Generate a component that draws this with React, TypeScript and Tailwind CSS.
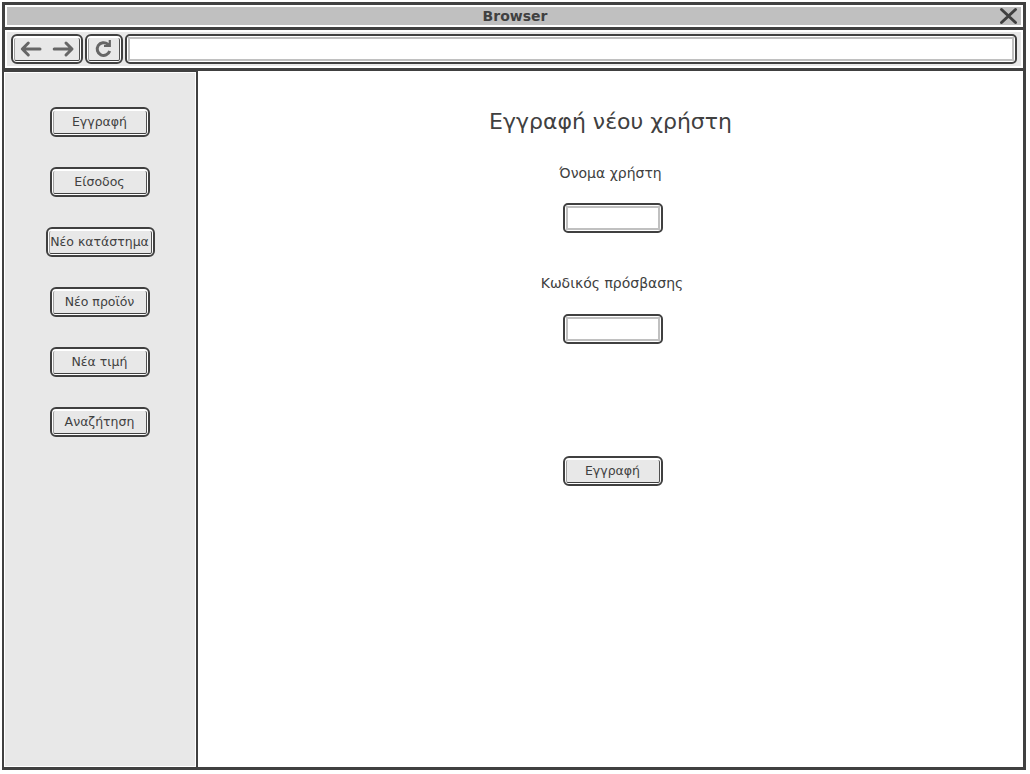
import React from "react";

function Button({ label, className = "w-[100px]" }: { label: string; className?: string }) {
  return (
    <button
      className={`flex h-[30px] shrink-0 rounded-[6px] border-2 border-[#404040] bg-white p-px pt-[2px] ${className}`}
    >
      <span className="flex h-full w-full items-center justify-center whitespace-nowrap rounded-[2px] border-b border-l border-r border-b-[#404040] border-l-[#a0a0a0] border-r-[#505050] bg-[#e8e8e8] pr-px text-[12.5px] leading-[14px]">
        {label}
      </span>
    </button>
  );
}

function Field({ className, label }: { className: string; label: string }) {
  return (
    <div className={`rounded-[5px] border-2 border-[#404040] bg-white p-px ${className}`}>
      <input aria-label={label} className="block h-full w-full border-2 border-[#c0c0c0] bg-white px-1 text-xs outline-none" />
    </div>
  );
}

const ICON = { fill: "none", stroke: "#666666", strokeWidth: 3, strokeLinecap: "round", strokeLinejoin: "round" } as const;

export default function App() {
  return (
    <div className="h-[774px] w-[1030px] bg-white pl-[2px] pt-[2px] font-['DejaVu_Sans',sans-serif] text-[#404040]">
      <div className="flex h-[768px] w-[1024px] flex-col border-[3px] border-[#404040]">
        <header className="h-[25px] shrink-0 border-b-[3px] border-[#404040] p-[2px]">
          <div className="flex h-full items-center bg-[#c0c0c0] pr-[3px]">
            <h1 className="flex-1 pl-[24px] text-center text-[14px] font-bold leading-[18px]">Browser</h1>
            <svg width="19" height="18" viewBox="0 0 19 18" fill="none" stroke="#404040" strokeWidth="3" strokeLinecap="round">
              <path d="M2.5 2.5 16.5 15.5M16.5 2.5 2.5 15.5" />
            </svg>
          </div>
        </header>
        <div className="h-[41px] shrink-0 border-b-[3px] border-[#404040] p-[2px]">
          <div className="flex h-full gap-[2px] bg-[#e8e8e8] px-1 pt-[2px]">
            <div className="h-[30px] w-[72px] rounded-[6px] border-2 border-[#404040] bg-white p-px pt-[2px]">
              <div className="flex h-full items-center justify-center rounded-[2px] border-x border-b border-l-[#a0a0a0] border-r-[#505050] border-b-[#404040] bg-[#e8e8e8]">
                <svg className="shrink-0" width="64" height="24" viewBox="15 37 64 24" {...ICON}>
                  <path d="M40 49H22.5M28.3 43l-6 6 6 6M54.2 49H71.5M66 43l6 6-6 6" />
                </svg>
              </div>
            </div>
            <div className="h-[30px] w-[38px] rounded-[6px] border-2 border-[#404040] bg-white p-px pt-[2px]">
              <div className="flex h-full items-center justify-center rounded-[2px] border-x border-b border-l-[#a0a0a0] border-r-[#505050] border-b-[#404040] bg-[#e8e8e8]">
                <svg className="shrink-0" width="30" height="24" viewBox="89 37 30 24" {...ICON} strokeLinecap="butt" strokeLinejoin="miter">
                  <path d="M109.7 51A6.4 6.4 0 1 1 107.8 44.2L109 45.4" />
                  <path d="M109.8 40V46H104" strokeWidth="2.2" />
                </svg>
              </div>
            </div>
            <Field label="Address" className="h-[30px] flex-1" />
          </div>
        </div>
        <div className="flex min-h-0 flex-1">
          <nav className="-ml-px -mt-px flex w-[194px] shrink-0 flex-col items-center gap-[30px] border-r-2 border-t-2 border-[#404040] bg-[#e8e8e8] pt-[35px] shadow-[inset_0_0_0_1px_white]">
            <Button label="Εγγραφή" />
            <Button label="Είσοδος" />
            <Button label="Νέο κατάστημα" className="w-[109px]" />
            <Button label="Νέο προϊόν" />
            <Button label="Νέα τιμή" />
            <Button label="Αναζήτηση" />
          </nav>
          <main className="flex flex-1 flex-col items-center pt-[36px]">
            <h2 className="text-[22px] leading-[30px]">Εγγραφή νέου χρήστη</h2>
            <p className="mt-[28px] text-[14px] leading-[17px]">Όνομα χρήστη</p>
            <Field label="Όνομα χρήστη" className="ml-[5px] mt-[21px] h-[30px] w-[100px]" />
            <p className="ml-[3px] mt-[42px] text-[14px] leading-[17px]">Κωδικός πρόσβασης</p>
            <Field label="Κωδικός πρόσβασης" className="ml-[5px] mt-[22px] h-[30px] w-[100px]" />
            <Button label="Εγγραφή" className="ml-[5px] mt-[112px] w-[100px]" />
          </main>
        </div>
      </div>
    </div>
  );
}
